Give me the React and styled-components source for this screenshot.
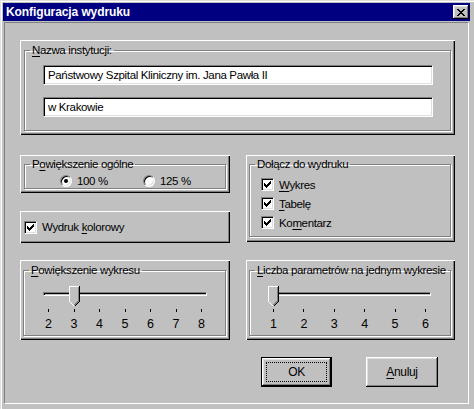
import React from 'react';
import styled, { createGlobalStyle } from 'styled-components';

const FONT = '"Liberation Sans", Arial, sans-serif';
const SIZE = '11.5px';
const TRACKING = '-0.35px';

const GlobalStyle = createGlobalStyle`
	html, body {
		margin: 0;
		padding: 0;
		background: #c0c0c0;
	}
	body {
		font-family: ${FONT};
		font-size: ${SIZE};
		letter-spacing: ${TRACKING};
		color: #000;
	}
`;

const Window = styled.div`
	box-sizing: border-box;
	width: 474px;
	height: 409px;
	padding: 3px 4px 0 3px;
	background: #c0c0c0;
	box-shadow: inset 1px 1px 0 #dfdfdf, inset 2px 2px 0 #fff;
	display: flex;
	flex-direction: column;
`;

const TitleBar = styled.div`
	height: 18px;
	background: #000080;
	display: flex;
	align-items: center;
	justify-content: space-between;
	padding: 0 1px 0 3px;
`;

const Title = styled.span`
	color: #fff;
	font-weight: bold;
	font-size: 12px;
	letter-spacing: -0.1px;
	line-height: 18px;
`;

const CloseButton = styled.button`
	box-sizing: border-box;
	width: 16px;
	height: 14px;
	margin: 0;
	padding: 0;
	border: none;
	background: #c0c0c0;
	box-shadow: inset -1px -1px 0 #000, inset 1px 1px 0 #fff, inset -2px -2px 0 #808080, inset 2px 2px 0 #dfdfdf;
	display: flex;
	align-items: center;
	justify-content: center;
`;

const Client = styled.div`
	box-sizing: border-box;
	height: 382px;
	margin: 1px 1px 0 1px;
	border: 1px solid;
	border-color: #808080 #fff #fff #808080;
	padding: 17px 0 0 15px;
`;

const Content = styled.div`
	width: 435px;
	display: flex;
	flex-direction: column;
`;

const Panel = styled.div`
	box-sizing: border-box;
	height: ${({$h}) => $h}px;
	padding: ${({$pad}) => $pad || '3px 3px 3px 4px'};
	background: #c0c0c0;
	box-shadow: inset 1px 1px 0 #fff, inset -1px -1px 0 #000, inset -2px -2px 0 #808080;
	display: flex;
	flex-direction: column;
	justify-content: ${({$center}) => $center ? 'center' : 'flex-start'};
`;

const GroupBox = styled.fieldset`
	flex: 1;
	min-width: 0;
	margin: 0 1px 1px 0;
	padding: 0;
	border: 1px solid #808080;
	box-shadow: 1px 1px 0 #fff, inset 1px 1px 0 #fff;
`;

const Legend = styled.legend`
	margin-left: 5px;
	padding: 0 2px;
	line-height: 14px;
	white-space: nowrap;
`;

const U = styled.span`
	text-decoration: underline;
	text-underline-offset: 2px;
`;

const Edit = styled.div`
	box-sizing: border-box;
	width: 390px;
	height: 20px;
	padding: 0 4px;
	background: #fff;
	border: 1px solid;
	border-color: #808080 #fff #fff #808080;
	box-shadow: inset 1px 1px 0 #000, inset -1px -1px 0 #dfdfdf;
	line-height: 18px;
	white-space: nowrap;
	overflow: hidden;
`;

const EditStack = styled.div`
	display: flex;
	flex-direction: column;
	gap: 12px;
	padding: 8px 0 0 18px;
`;

const RadioRow = styled.div`
	display: grid;
	grid-template-columns: 83px 83px;
	padding: 3px 0 0 35px;
`;

const Choice = styled.label`
	display: flex;
	align-items: center;
	gap: 5px;
	height: ${({$h}) => $h || 14}px;
	line-height: 14px;
	white-space: nowrap;
`;

const RadioMark = styled.span`
	box-sizing: border-box;
	position: relative;
	width: 12px;
	height: 12px;
	border-radius: 50%;
	background: #fff;
	border: 1px solid;
	border-color: #808080 #fff #fff #808080;
	box-shadow: inset 1px 1px 0 #000, inset -1px -1px 0 #dfdfdf;
	flex: none;

	&::after {
		content: '';
		display: ${({$checked}) => $checked ? 'block' : 'none'};
		position: absolute;
		left: 3px;
		top: 3px;
		width: 4px;
		height: 4px;
		border-radius: 50%;
		background: #000;
	}
`;

const CheckMark = styled.span`
	box-sizing: border-box;
	width: 13px;
	height: 13px;
	background: #fff;
	border: 1px solid;
	border-color: #808080 #fff #fff #808080;
	box-shadow: inset 1px 1px 0 #000, inset -1px -1px 0 #dfdfdf;
	display: flex;
	align-items: center;
	justify-content: center;
	flex: none;
`;

const CheckList = styled.div`
	display: flex;
	flex-direction: column;
	padding: 4px 0 0 11px;
`;

const Grid = styled.div`
	display: grid;
	grid-template-columns: 210px 209px;
	column-gap: 16px;
	align-items: start;
	margin-top: ${({$mt}) => $mt}px;
`;

const Column = styled.div`
	display: flex;
	flex-direction: column;
	gap: 18px;
`;

const SliderBox = styled.div`
	width: ${({$w}) => $w}px;
	margin: 9px 0 0 ${({$ml}) => $ml}px;
`;

const TrackArea = styled.div`
	position: relative;
	height: 21px;
`;

const Track = styled.div`
	box-sizing: border-box;
	position: relative;
	top: 6px;
	height: 4px;
	border: 1px solid;
	border-color: #808080 #fff #fff #808080;
	box-shadow: inset 1px 1px 0 #000;
	background: #c0c0c0;
`;

const Thumb = styled.svg`
	position: absolute;
	top: 0;
	width: 11px;
	height: 21px;
`;

const Ticks = styled.div`
	display: flex;
	justify-content: space-between;
	padding: 0 5px;
	margin-top: 2px;
	height: 3px;
`;

const Tick = styled.span`
	width: 1px;
	height: 3px;
	background: #000;
`;

const Labels = styled.div`
	display: flex;
	justify-content: space-between;
	margin-top: 5px;
`;

const TickLabel = styled.span`
	width: 11px;
	text-align: center;
	font-size: 12.5px;
	line-height: 14px;
	letter-spacing: 0;
`;

const ButtonRow = styled.div`
	display: flex;
	justify-content: flex-end;
	gap: 34px;
	margin-top: 17px;
	padding-right: 17px;
`;

const Button = styled.button`
	box-sizing: border-box;
	width: ${({$w}) => $w}px;
	height: 30px;
	margin: 0;
	padding: 0;
	font-family: ${FONT};
	font-size: 12px;
	letter-spacing: ${TRACKING};
	color: #000;
	background: #c0c0c0;
	border: ${({$default}) => $default ? '1px solid #000' : 'none'};
	box-shadow: inset -1px -1px 0 #000, inset 1px 1px 0 #fff, inset -2px -2px 0 #808080, inset 2px 2px 0 #dfdfdf;
	display: flex;
	align-items: center;
	justify-content: center;
`;

const FocusRect = styled.span`
	box-sizing: border-box;
	width: calc(100% - 8px);
	height: calc(100% - 8px);
	border: 1px dotted #000;
	display: flex;
	align-items: center;
	justify-content: center;
`;

const CloseGlyph = () => (
	<svg width="8" height="7" viewBox="0 0 8 7" shapeRendering="crispEdges">
		<path fill="#000" d="M0 0h2v1H0zM6 0h2v1H6zM1 1h2v1H1zM5 1h2v1H5zM2 2h4v1H2zM3 3h2v1H3zM2 4h4v1H2zM1 5h2v1H1zM5 5h2v1H5zM0 6h2v1H0zM6 6h2v1H6z"/>
	</svg>
);

const Check = () => (
	<svg width="7" height="7" viewBox="0 0 7 7" shapeRendering="crispEdges">
		<path fill="#000" d="M6 0h1v1H6zM5 1h2v1H5zM0 2h1v1H0zM4 2h3v1H4zM0 3h2v1H0zM3 3h3v1H3zM0 4h5v1H0zM1 5h3v1H1zM2 6h1v1H2z"/>
	</svg>
);

const Radio = ({checked, children}) => (
	<Choice>
		<RadioMark $checked={checked} />
		<span>{children}</span>
	</Choice>
);

const CheckBox = ({children, h}) => (
	<Choice $h={h}>
		<CheckMark><Check /></CheckMark>
		<span>{children}</span>
	</Choice>
);

const Slider = ({min, max, value, width, offset}) => {
	const ticks = [];
	for (let i = min; i <= max; i++) ticks.push(i);
	const left = ((value - min) / (max - min)) * (width - 10);
	return (
		<SliderBox $w={width} $ml={offset}>
			<TrackArea>
				<Track />
				<Thumb viewBox="0 0 11 21" shapeRendering="crispEdges" style={{left}}>
					<path fill="#c0c0c0" d="M0 0h11v16l-5 5l-5-5z" />
					<path fill="none" stroke="#fff" d="M0.5 15.5V0.5H10" />
					<path fill="none" stroke="#000" d="M10.5 0V15.5L5.5 20.5" />
					<path fill="none" stroke="#808080" d="M9.5 1V15L5.5 19" />
					<path fill="none" stroke="#fff" d="M0.5 15.5L5 20" />
				</Thumb>
			</TrackArea>
			<Ticks>{ticks.map(t => <Tick key={t} />)}</Ticks>
			<Labels>{ticks.map(t => <TickLabel key={t}>{t}</TickLabel>)}</Labels>
		</SliderBox>
	);
};

export default function App() {
	return (
		<>
			<GlobalStyle />
			<Window>
				<TitleBar>
					<Title>Konfiguracja wydruku</Title>
					<CloseButton aria-label="Zamknij"><CloseGlyph /></CloseButton>
				</TitleBar>
				<Client>
					<Content>
						<Panel $h={95}>
							<GroupBox>
								<Legend><U>N</U>azwa instytucji:</Legend>
								<EditStack>
									<Edit>Państwowy Szpital Kliniczny im. Jana Pawła II</Edit>
									<Edit>w Krakowie</Edit>
								</EditStack>
							</GroupBox>
						</Panel>

						<Grid $mt={20}>
							<Column>
								<Panel $h={38} $pad="2px 3px 3px 4px">
									<GroupBox>
										<Legend>P<U>o</U>większenie ogólne</Legend>
										<RadioRow>
											<Radio checked>100 %</Radio>
											<Radio>125 %</Radio>
										</RadioRow>
									</GroupBox>
								</Panel>
								<Panel $h={32} $pad="0 3px 0 4px" $center>
									<CheckBox>Wydruk <U>k</U>olorowy</CheckBox>
								</Panel>
							</Column>
							<Panel $h={87} $pad="2px 3px 4px 3px">
								<GroupBox>
									<Legend>Dołącz do wydruku</Legend>
									<CheckList>
										<CheckBox h={19}><U>W</U>ykres</CheckBox>
										<CheckBox h={19}><U>T</U>abelę</CheckBox>
										<CheckBox h={19}>Ko<U>m</U>entarz</CheckBox>
									</CheckList>
								</GroupBox>
							</Panel>
						</Grid>

						<Grid $mt={17}>
							<Panel $h={80} $pad="3px 3px 3px 3px">
								<GroupBox>
									<Legend><U>P</U>owiększenie wykresu</Legend>
									<Slider min={2} max={8} value={3} width={164} offset={19} />
								</GroupBox>
							</Panel>
							<Panel $h={80} $pad="3px 3px 3px 3px">
								<GroupBox>
									<Legend><U>L</U>iczba parametrów na jednym wykresie</Legend>
									<Slider min={1} max={6} value={1} width={163} offset={18} />
								</GroupBox>
							</Panel>
						</Grid>

						<ButtonRow>
							<Button $w={71} $default><FocusRect>OK</FocusRect></Button>
							<Button $w={72}><span><U>A</U>nuluj</span></Button>
						</ButtonRow>
					</Content>
				</Client>
			</Window>
		</>
	);
}
